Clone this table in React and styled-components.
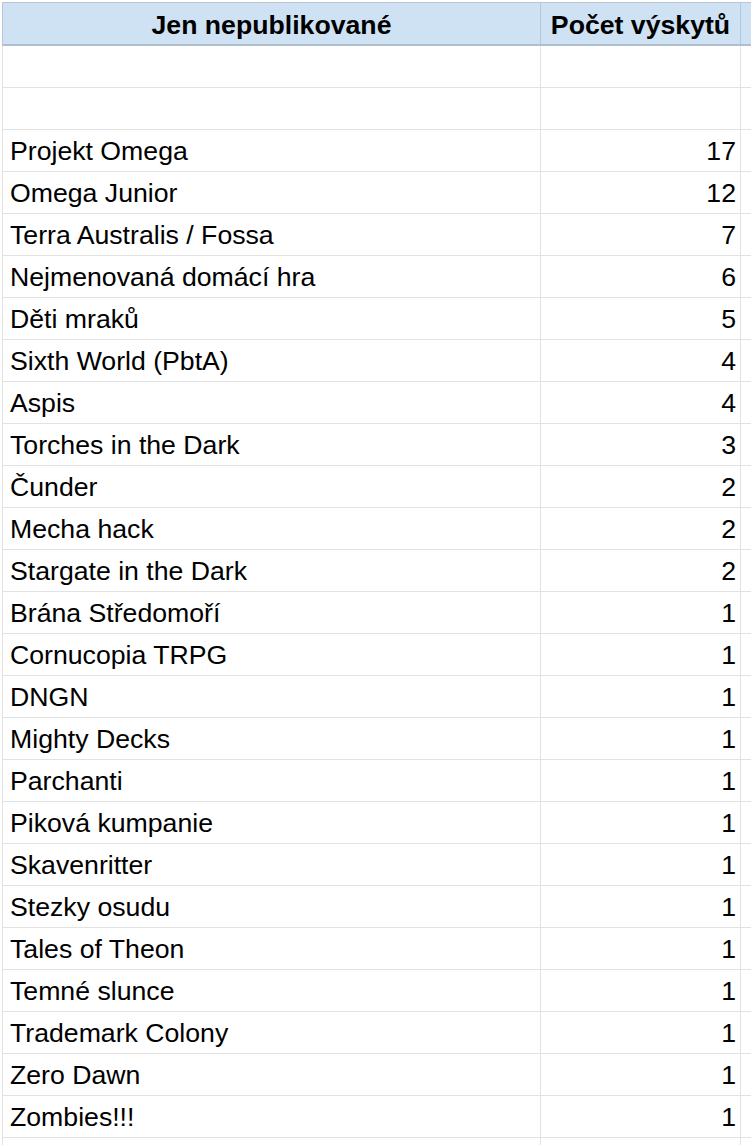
import React from "react";
import styled, { createGlobalStyle } from "styled-components";

const rows = [
  ["", ""],
  ["", ""],
  ["Projekt Omega", 17],
  ["Omega Junior", 12],
  ["Terra Australis / Fossa", 7],
  ["Nejmenovaná domácí hra", 6],
  ["Děti mraků", 5],
  ["Sixth World (PbtA)", 4],
  ["Aspis", 4],
  ["Torches in the Dark", 3],
  ["Čunder", 2],
  ["Mecha hack", 2],
  ["Stargate in the Dark", 2],
  ["Brána Středomoří", 1],
  ["Cornucopia TRPG", 1],
  ["DNGN", 1],
  ["Mighty Decks", 1],
  ["Parchanti", 1],
  ["Piková kumpanie", 1],
  ["Skavenritter", 1],
  ["Stezky osudu", 1],
  ["Tales of Theon", 1],
  ["Temné slunce", 1],
  ["Trademark Colony", 1],
  ["Zero Dawn", 1],
  ["Zombies!!!", 1],
];

function App() {
  return (
    <>
      <GlobalStyle />
      <Sheet>
        <HeaderRow>
          <HeadCell>Jen nepublikované</HeadCell>
          <HeadCell narrow>Počet výskytů</HeadCell>
          <HeadFiller />
        </HeaderRow>
        {rows.map(([name, count], i) => (
          <Row key={i}>
            <Cell>{name}</Cell>
            <Cell narrow>{count}</Cell>
            <Filler />
          </Row>
        ))}
        <Row>
          <Cell />
          <Cell narrow />
          <Filler />
        </Row>
      </Sheet>
    </>
  );
}

export default App;

const GlobalStyle = createGlobalStyle`
  html, body {
    margin: 0;
    background: #ffffff;
  }
  body {
    font-family: "Liberation Sans", Arial, sans-serif;
    color: #000;
  }
`;

const Sheet = styled.div`
  padding: 2px 0 0 2px;
  width: 751px;
  height: 1145px;
  overflow: hidden;
  box-sizing: border-box;
`;

const HeaderRow = styled.div`
  display: flex;
  height: 41px;
  background: #cfe2f3;
  border-top: 1px solid #b7c5d4;
  border-bottom: 2px solid #aebfd0;
  border-left: 1px solid #b7c5d4;
`;

const HeadCell = styled.div`
  width: ${(p) => (p.narrow ? "200px" : "538px")};
  flex: none;
  display: flex;
  align-items: center;
  justify-content: center;
  padding-top: 4px;
  box-sizing: border-box;
  font-weight: 700;
  font-size: 26.67px;
  border-right: 1px solid #b7c5d4;
  white-space: nowrap;
`;

const HeadFiller = styled.div`
  flex: 1;
`;

const Row = styled.div`
  display: flex;
  height: 42px;
  box-sizing: border-box;
  border-bottom: 1px solid #e2e2e2;
  border-left: 1px solid #e2e2e2;
`;

const Cell = styled.div`
  width: ${(p) => (p.narrow ? "200px" : "538px")};
  flex: none;
  display: flex;
  align-items: center;
  justify-content: ${(p) => (p.narrow ? "flex-end" : "flex-start")};
  padding: ${(p) => (p.narrow ? "2px 4px 0 0" : "2px 0 0 7px")};
  box-sizing: border-box;
  font-size: 26.67px;
  border-right: 1px solid #e2e2e2;
  white-space: nowrap;
`;

const Filler = styled.div`
  flex: 1;
`;
